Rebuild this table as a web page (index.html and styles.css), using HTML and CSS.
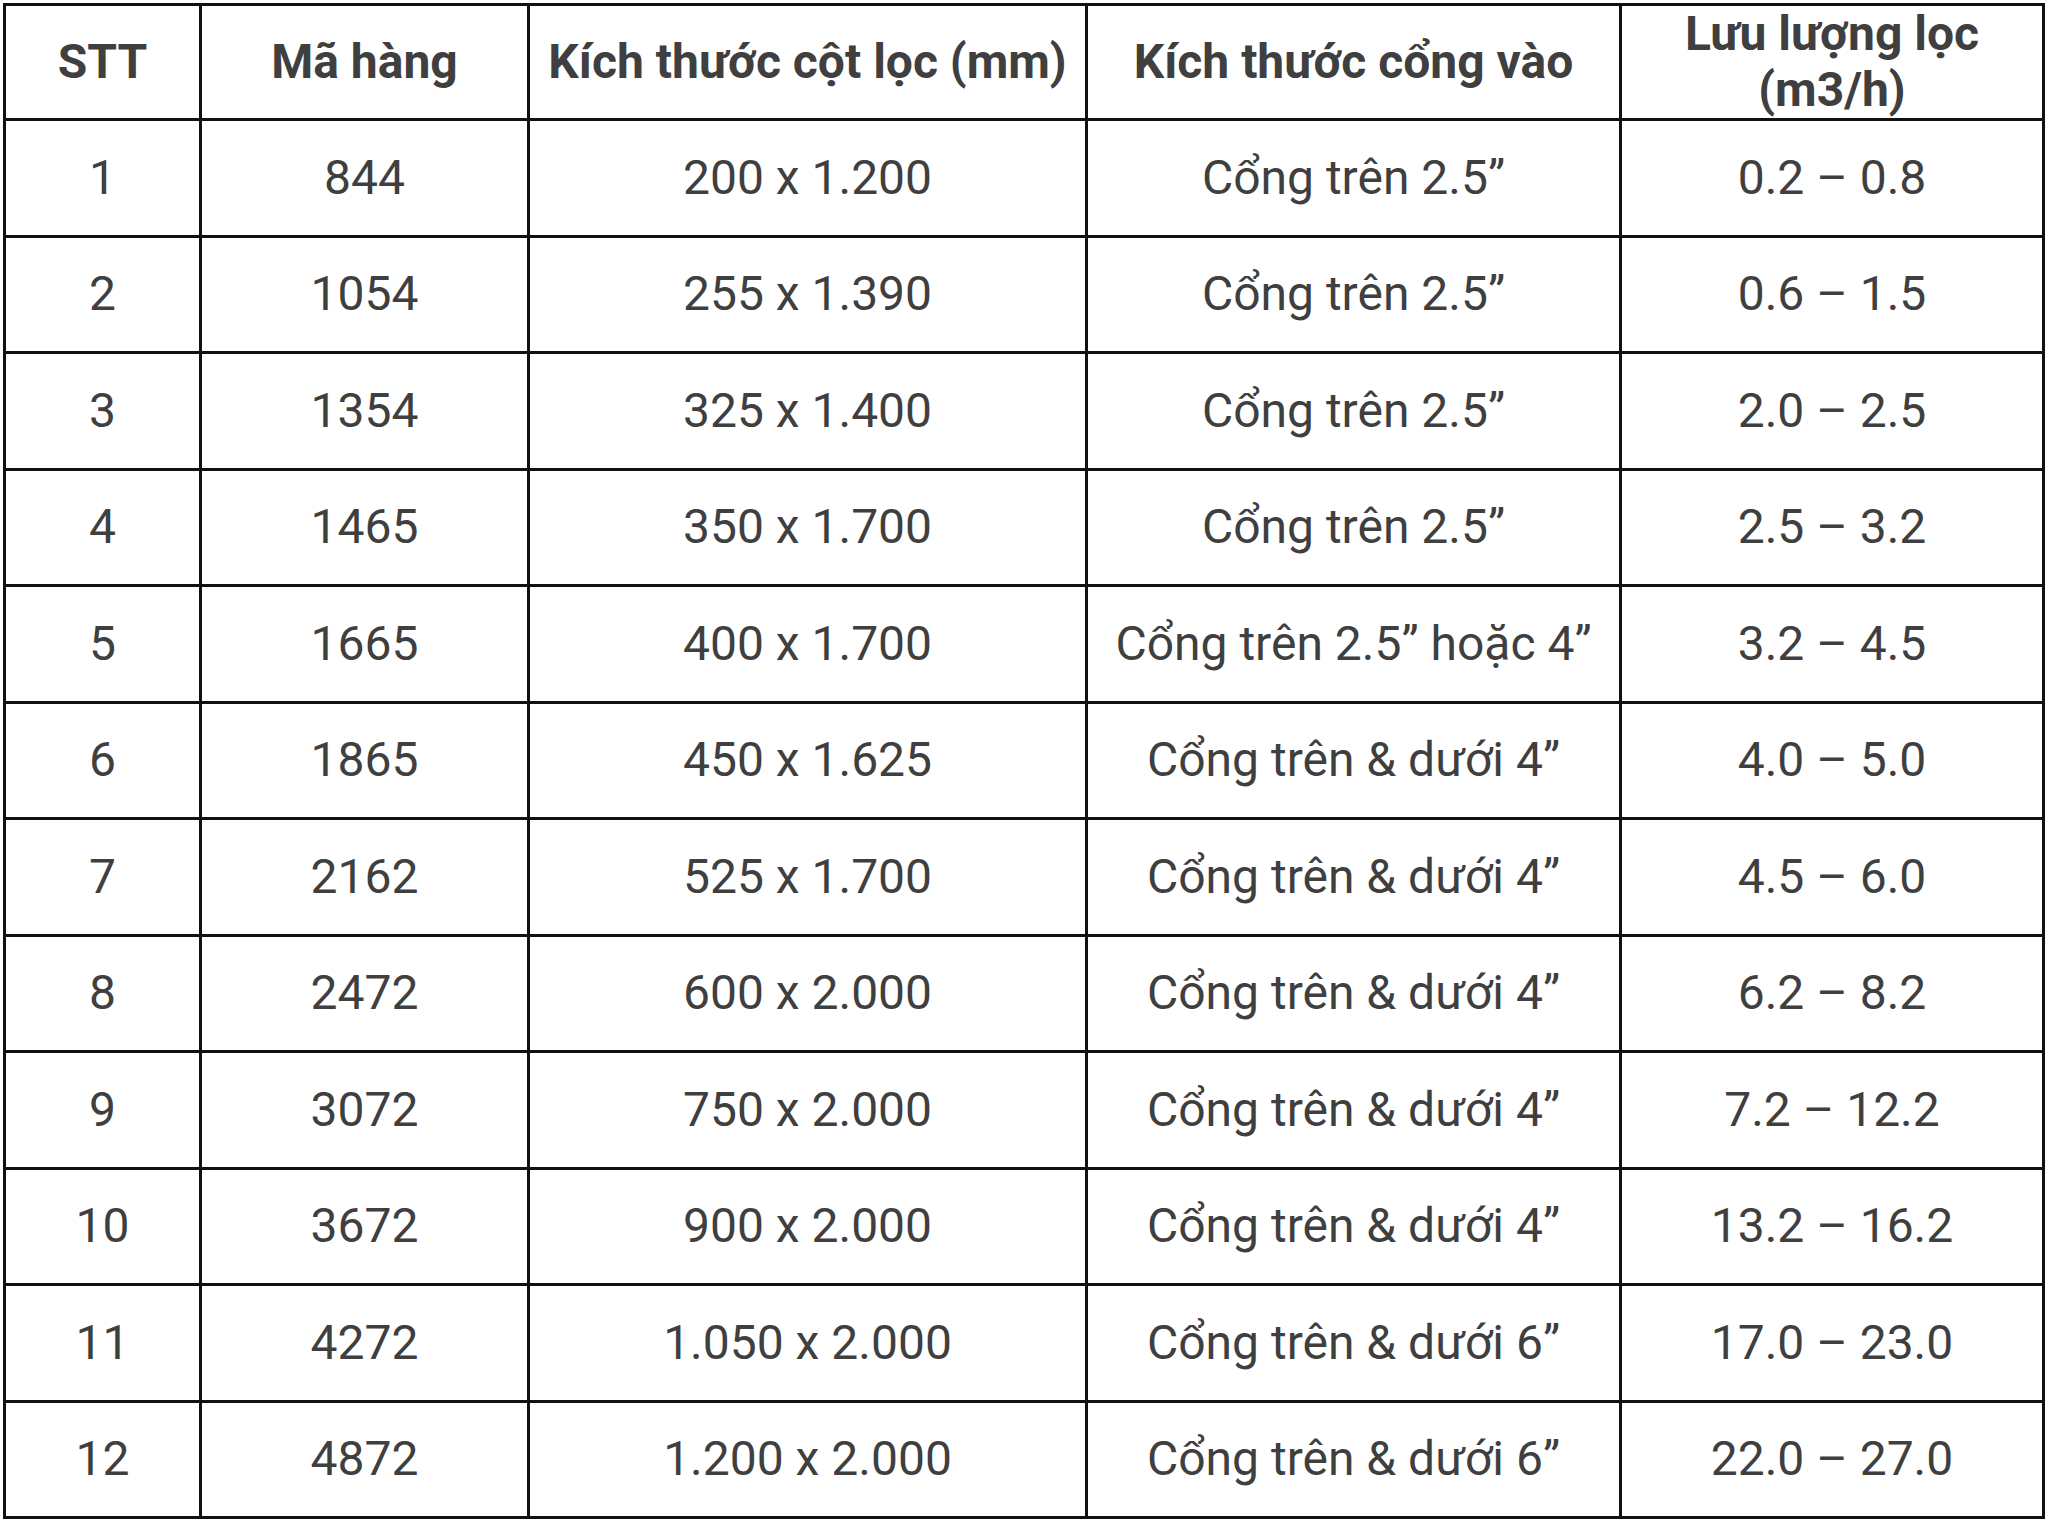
FILE: index.html
```html
<!DOCTYPE html>
<html lang="vi">
<head>
<meta charset="utf-8">
<title>Bảng thông số cột lọc</title>
<link rel="stylesheet" href="styles.css">
</head>
<body>
<table class="spec">
  <colgroup>
    <col class="c1"><col class="c2"><col class="c3"><col class="c4"><col class="c5">
  </colgroup>
  <thead>
    <tr>
      <th>STT</th>
      <th>Mã hàng</th>
      <th>Kích thước cột lọc (mm)</th>
      <th>Kích thước cổng vào</th>
      <th>Lưu lượng lọc<br>(m3/h)</th>
    </tr>
  </thead>
  <tbody>
    <tr><td>1</td><td>844</td><td>200 x 1.200</td><td>Cổng trên 2.5”</td><td>0.2 – 0.8</td></tr>
    <tr><td>2</td><td>1054</td><td>255 x 1.390</td><td>Cổng trên 2.5”</td><td>0.6 – 1.5</td></tr>
    <tr><td>3</td><td>1354</td><td>325 x 1.400</td><td>Cổng trên 2.5”</td><td>2.0 – 2.5</td></tr>
    <tr><td>4</td><td>1465</td><td>350 x 1.700</td><td>Cổng trên 2.5”</td><td>2.5 – 3.2</td></tr>
    <tr><td>5</td><td>1665</td><td>400 x 1.700</td><td>Cổng trên 2.5” hoặc 4”</td><td>3.2 – 4.5</td></tr>
    <tr><td>6</td><td>1865</td><td>450 x 1.625</td><td>Cổng trên &amp; dưới 4”</td><td>4.0 – 5.0</td></tr>
    <tr><td>7</td><td>2162</td><td>525 x 1.700</td><td>Cổng trên &amp; dưới 4”</td><td>4.5 – 6.0</td></tr>
    <tr><td>8</td><td>2472</td><td>600 x 2.000</td><td>Cổng trên &amp; dưới 4”</td><td>6.2 – 8.2</td></tr>
    <tr><td>9</td><td>3072</td><td>750 x 2.000</td><td>Cổng trên &amp; dưới 4”</td><td>7.2 – 12.2</td></tr>
    <tr><td>10</td><td>3672</td><td>900 x 2.000</td><td>Cổng trên &amp; dưới 4”</td><td>13.2 – 16.2</td></tr>
    <tr><td>11</td><td>4272</td><td>1.050 x 2.000</td><td>Cổng trên &amp; dưới 6”</td><td>17.0 – 23.0</td></tr>
    <tr><td>12</td><td>4872</td><td>1.200 x 2.000</td><td>Cổng trên &amp; dưới 6”</td><td>22.0 – 27.0</td></tr>
  </tbody>
</table>
</body>
</html>
```

FILE: styles.css
```css
html, body {
  margin: 0;
  padding: 0;
  background: #ffffff;
}
body {
  padding: 3px 0 0 3px;
  font-family: Roboto, "Noto Sans", "Liberation Sans", sans-serif;
  color: #3f3f3f;
}
.spec {
  table-layout: fixed;
  border-collapse: separate;
  border-spacing: 0;
  width: 2042px;
  height: 1516px;
  border-left: 3px solid #111111;
  border-top: 3px solid #111111;
}
.c1 { width: 196px; }
.c2 { width: 328px; }
.c3 { width: 558px; }
.c4 { width: 534px; }
.c5 { width: 423px; }
.spec th,
.spec td {
  box-sizing: border-box;
  border-right: 3px solid #111111;
  border-bottom: 3px solid #111111;
  padding: 0;
  text-align: center;
  vertical-align: middle;
  white-space: nowrap;
}
.spec th {
  font-weight: 700;
  font-size: 48px;
  line-height: 56px;
}
.spec td {
  font-weight: 400;
  font-size: 48px;
  line-height: 56px;
}
```
